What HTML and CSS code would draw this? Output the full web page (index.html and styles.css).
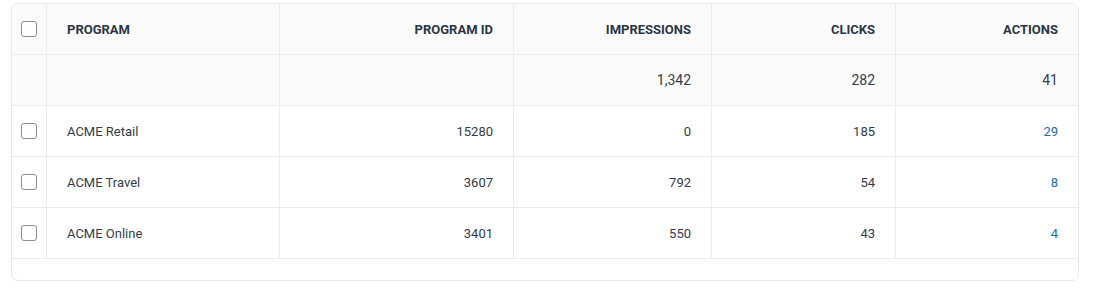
FILE: index.html
```html
<!DOCTYPE html>
<html>
<head>
<meta charset="utf-8">
<link rel="stylesheet" href="styles.css">
</head>
<body>
<div class="card">
  <table class="grid">
    <colgroup>
      <col class="c-check">
      <col class="c-program">
      <col class="c-id">
      <col class="c-imp">
      <col class="c-clicks">
      <col class="c-actions">
    </colgroup>
    <thead>
      <tr class="head">
        <th class="check"><span class="box"></span></th>
        <th class="left">PROGRAM</th>
        <th>PROGRAM ID</th>
        <th>IMPRESSIONS</th>
        <th>CLICKS</th>
        <th>ACTIONS</th>
      </tr>
      <tr class="total">
        <td class="check"></td>
        <td class="left"></td>
        <td></td>
        <td>1,342</td>
        <td>282</td>
        <td>41</td>
      </tr>
    </thead>
    <tbody>
      <tr>
        <td class="check"><span class="box"></span></td>
        <td class="left">ACME Retail</td>
        <td>15280</td>
        <td>0</td>
        <td>185</td>
        <td><a class="link" href="#">29</a></td>
      </tr>
      <tr>
        <td class="check"><span class="box"></span></td>
        <td class="left">ACME Travel</td>
        <td>3607</td>
        <td>792</td>
        <td>54</td>
        <td><a class="link" href="#">8</a></td>
      </tr>
      <tr>
        <td class="check"><span class="box"></span></td>
        <td class="left">ACME Online</td>
        <td>3401</td>
        <td>550</td>
        <td>43</td>
        <td><a class="link" href="#">4</a></td>
      </tr>
    </tbody>
  </table>
  <div class="footer"></div>
</div>
</body>
</html>
```

FILE: styles.css
```css
html, body {
  margin: 0;
  padding: 0;
  background: #ffffff;
}
body {
  padding: 3px 22px 0 11px;
  font-family: Roboto, "Liberation Sans", Arial, sans-serif;
  color: #2f3a48;
}
.card {
  width: 1068px;
  box-sizing: border-box;
  border: 1px solid #e9e9e9;
  border-radius: 7px;
  overflow: hidden;
  background: #ffffff;
}
.grid {
  width: 100%;
  border-collapse: separate;
  border-spacing: 0;
  table-layout: fixed;
}
.c-check { width: 34px; }
.c-program { width: 233px; }
.c-id { width: 234px; }
.c-imp { width: 198px; }
.c-clicks { width: 184px; }
.c-actions { width: 183px; }

.grid th, .grid td {
  height: 51px;
  padding: 0 20px;
  text-align: right;
  border-bottom: 1px solid #ececec;
  border-left: 1px solid #ececec;
  font-size: 13px;
  box-sizing: border-box;
}
.grid th:first-child, .grid td:first-child {
  border-left: none;
}
.grid .left {
  text-align: left;
}
.grid .check {
  padding: 0;
  text-align: center;
}
.head th {
  background: #fafafa;
  font-weight: 700;
  color: #2b3645;
  font-size: 13px;
}
.total td {
  background: #fafafa;
  font-size: 14px;
  color: #333d4a;
}
tbody td {
  color: #323c49;
}
.box {
  display: inline-block;
  width: 16px;
  height: 16px;
  box-sizing: border-box;
  border: 1px solid #8d8d8d;
  border-radius: 3px;
  background: #fff;
  vertical-align: middle;
}
.link {
  color: #1e6bb0;
  text-decoration: none;
}
.footer {
  height: 21px;
}
```
